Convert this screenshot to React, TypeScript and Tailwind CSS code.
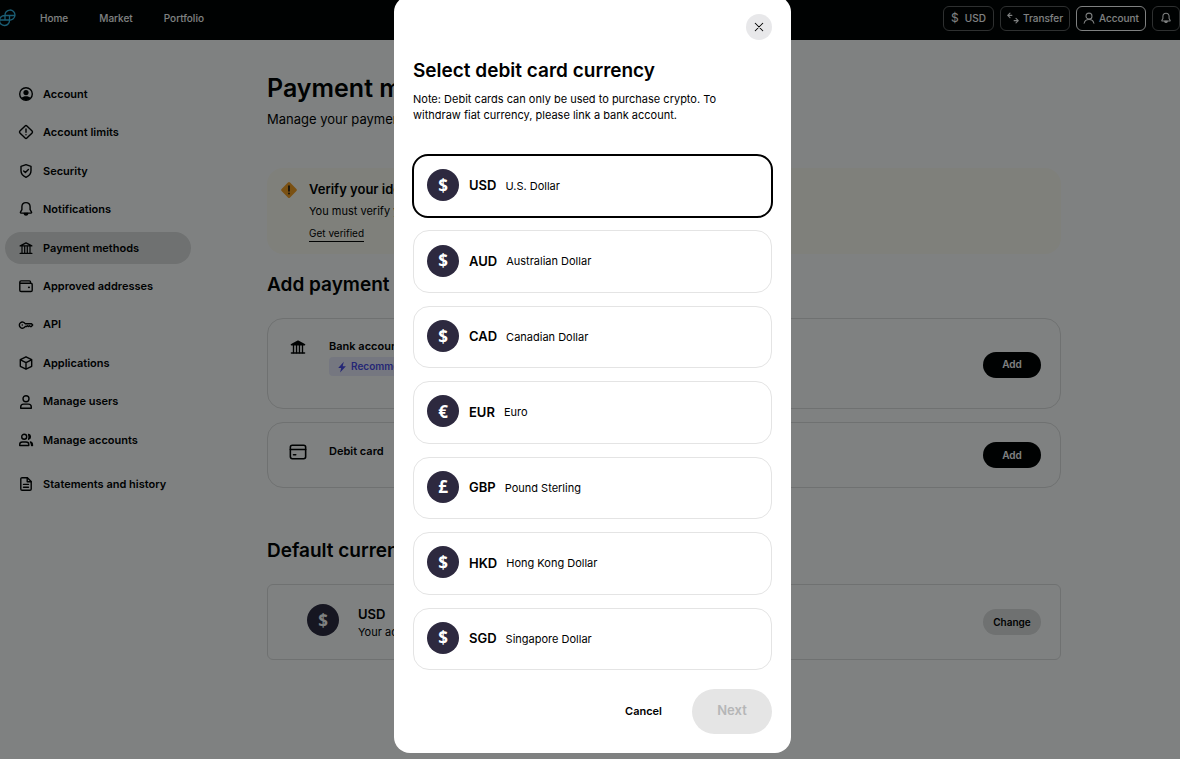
import { type ReactNode, useState } from "react";

/* ── Icons ───────────────────────────────────────────────── */

type IconProps = { className?: string; children?: ReactNode };

const Icon = ({ className = "size-4", children }: IconProps) => (
  <svg
    aria-hidden="true"
    viewBox="0 0 16 16"
    fill="none"
    stroke="currentColor"
    strokeWidth="1.4"
    strokeLinecap="round"
    strokeLinejoin="round"
    className={`shrink-0 ${className}`}
  >
    {children}
  </svg>
);

const AccountCircleIcon = () => (
  <Icon>
    <circle cx="8" cy="8" r="6.3" />
    <circle cx="8" cy="6.6" r="2.6" fill="currentColor" stroke="none" />
    <path d="M3.4 12.1c1-1.4 2.7-1.8 4.6-1.8s3.6.4 4.6 1.8A6.2 6.2 0 0 1 8 14.3a6.2 6.2 0 0 1-4.6-2.2z" fill="currentColor" stroke="none" />
  </Icon>
);

const LimitsIcon = () => (
  <Icon>
    <path d="M7.1 1.9a1.3 1.3 0 0 1 1.8 0l5.2 5.2a1.3 1.3 0 0 1 0 1.8l-5.2 5.2a1.3 1.3 0 0 1-1.8 0L1.9 8.9a1.3 1.3 0 0 1 0-1.8z" />
    <path d="M8 5v3.2M8 10.6v.2" />
  </Icon>
);

const ShieldIcon = () => (
  <Icon>
    <path d="M8 1.7l5 1.6v4.5c0 3.3-2.2 5.3-5 6.5-2.8-1.2-5-3.2-5-6.500V3.3z" />
    <path d="M5.7 7.900l1.7 1.7 3-3.1" />
  </Icon>
);

const BellIcon = ({ className }: IconProps) => (
  <Icon className={className}>
    <path d="M8 1.6c-2.6 0-4.1 1.9-4.1 4.2v2.9L2.5 11.1c-.3.5 0 1 .5 1h10c.5 0 .8-.5.5-1l-1.4-2.4V5.8c0-2.3-1.5-4.2-4.1-4.2z" />
    <path d="M6.2 12.5c.2 1 .9 1.6 1.8 1.6s1.6-.6 1.8-1.6z" fill="currentColor" />
  </Icon>
);

const BankIcon = ({ className, filled = false }: IconProps & { filled?: boolean }) => (
  <Icon className={className}>
    <path d="M2.2 5.9L8 2.9l5.8 3z" fill={filled ? "currentColor" : "none"} />
    <path d="M4 6.4v6.8M6.7 6.4v6.8M9.300 6.400v6.800M12 6.400v6.800" strokeWidth="1.2" />
    <path d="M2.200 13.400h11.600" />
  </Icon>
);

const WalletIcon = () => (
  <Icon>
    <path d="M1.8 4.3v7.9c0 .8.5 1.3 1.3 1.3h9.8c.8 0 1.3-.5 1.3-1.3V6.5c0-.8-.5-1.3-1.3-1.3H2.7c-.6 0-.9-.4-.9-.9 0-.8.5-1.4 1.3-1.4h8.4c.6 0 1 .4 1 1v1.2" />
    <path d="M10.8 9.3h.3" strokeWidth="1.8" />
  </Icon>
);

const KeyIcon = () => (
  <Icon>
    <path d="M7.2 6.7h6.3L14.7 8l-1.4 1.5h-1l-.9-.8-1 .9-1-.9-.9.8H7.200A3.100 3.100 0 1 1 7.200 6.700z" />
    <path d="M4.2 8h.1" />
  </Icon>
);

const CubeIcon = () => (
  <Icon>
    <path d="M8 1.8l5.7 2.9v6.6L8 14.2l-5.7-2.900V4.7zM2.5 4.8L8 7.7l5.5-2.900M8 7.7v6.300" />
  </Icon>
);

const UserIcon = () => (
  <Icon>
    <circle cx="8" cy="4.7" r="3" />
    <path d="M2.7 14.2v-1.3c0-1.7 1.2-2.8 2.9-2.8h4.8c1.7 0 2.9 1.1 2.9 2.8v1.3z" />
  </Icon>
);

const UsersIcon = () => (
  <Icon>
    <circle cx="6.2" cy="4.8" r="2.5" />
    <path d="M1.7 13.5v-.9c0-1.6 1.1-2.6 2.7-2.6h3.7c1.6 0 2.7 1 2.7 2.6v.9z" />
    <path d="M10.6 2.4a2.500 2.500 0 0 1 0 4.8c.7-1.500.7-3.300 0-4.800zM12.400 10c1.500.3 2.100 1.500 2.100 3.500h-.9c0-1.500-.3-2.500-1.200-3.500z" fill="currentColor" />
  </Icon>
);

const DocumentIcon = () => (
  <Icon>
    <path d="M9.4 1.7H4.1c-.8 0-1.3.5-1.3 1.3v10c0 .8.5 1.3 1.3 1.3h7.8c.8 0 1.3-.5 1.3-1.3V5.5z" />
    <path d="M9.2 1.9v3.8h3.8M5.5 8.4h5M5.5 11.2h5" />
  </Icon>
);

const CardIcon = () => (
  <Icon className="size-[18px]">
    <rect x="1.2" y="2" width="13.6" height="12" rx="1.7" />
    <path d="M1.2 5.7h13.6M4 10.5h2" />
  </Icon>
);

const PersonIcon = () => (
  <Icon className="size-3">
    <circle cx="8" cy="5.5" r="4" />
    <path d="M1.5 15c.7-3.2 3.2-5 6.5-5s5.8 1.8 6.5 5" />
  </Icon>
);

const TransferIcon = () => (
  <Icon className="size-3">
    <path d="M4 1.5L1 4.5l3 3M1 4.5h5.5M12 8.5l3 3-3 3M15 11.5H9.5" />
  </Icon>
);

const WarningIcon = () => (
  <svg aria-hidden="true" viewBox="0 0 18 18" className="size-[18px] shrink-0">
    <rect x="3" y="3" width="12" height="12" rx="1.5" transform="rotate(45 9 9)" fill="#f59e23" />
    <path d="M9 5v5M9 12.2v.6" stroke="#111" strokeWidth="1.6" strokeLinecap="round" />
  </svg>
);

const BoltIcon = () => (
  <svg aria-hidden="true" viewBox="0 0 10 12" className="h-3 w-2.5 shrink-0" fill="currentColor">
    <path d="M6.8.8L1.2 6.9h3L3.1 11.4 8.9 5.2H5.7z" />
  </svg>
);

const LogoIcon = () => (
  <svg aria-hidden="true" viewBox="0 0 18 18" className="-ml-0.5 size-[18px]" fill="none" stroke="#35b8e6" strokeWidth="1.3">
    <path d="M7 6.5A5 5 0 1 1 11.5 11H2M16.4 6.5H6.5A5 5 0 1 0 11.5 11M7 6v5M11.5 6.5V11" />
  </svg>
);

/* ── Data ────────────────────────────────────────────────── */

const NAV_LINKS = ["Home", "Market", "Portfolio"];

const SIDEBAR_ITEMS = [
  { label: "Account", icon: <AccountCircleIcon /> },
  { label: "Account limits", icon: <LimitsIcon /> },
  { label: "Security", icon: <ShieldIcon /> },
  { label: "Notifications", icon: <BellIcon /> },
  { label: "Payment methods", icon: <BankIcon />, active: true },
  { label: "Approved addresses", icon: <WalletIcon /> },
  { label: "API", icon: <KeyIcon /> },
  { label: "Applications", icon: <CubeIcon /> },
  { label: "Manage users", icon: <UserIcon /> },
  { label: "Manage accounts", icon: <UsersIcon /> },
];

const CURRENCIES = [
  { code: "USD", name: "U.S. Dollar", symbol: "$" },
  { code: "AUD", name: "Australian Dollar", symbol: "$" },
  { code: "CAD", name: "Canadian Dollar", symbol: "$" },
  { code: "EUR", name: "Euro", symbol: "€" },
  { code: "GBP", name: "Pound Sterling", symbol: "£" },
  { code: "HKD", name: "Hong Kong Dollar", symbol: "$" },
  { code: "SGD", name: "Singapore Dollar", symbol: "$" },
];

/* ── Shared pieces ───────────────────────────────────────── */

const CurrencyBadge = ({ symbol }: { symbol: string }) => (
  <span
    aria-hidden="true"
    className="flex size-8 shrink-0 items-center justify-center rounded-full bg-[#2d293f] font-['Open_Sans',sans-serif] text-[17px] leading-none font-bold text-white"
  >
    {symbol}
  </span>
);

const AddButton = () => (
  <button type="button" className="h-[26px] w-[58px] rounded-full bg-black text-[10px] font-semibold text-white">
    Add
  </button>
);

type SidebarLinkProps = { label: string; icon: ReactNode; active?: boolean };

const SidebarLink = ({ label, icon, active }: SidebarLinkProps) => (
  <a
    href="#"
    className={`flex h-8 items-center gap-[9px] rounded-full pl-[13px] text-[11px] font-semibold ${active ? "bg-[#dedede]" : ""}`}
  >
    {icon}
    {label}
  </a>
);

/* ── Page sections ───────────────────────────────────────── */

const Header = () => (
  <header className="flex h-10 items-center justify-between bg-black pb-1 text-[10px] font-medium text-white">
    <nav className="flex items-center">
      <a href="#" aria-label="Gemini" className="mr-6">
        <LogoIcon />
      </a>
      <div className="flex gap-[31px]">
        {NAV_LINKS.map((link) => (
          <a key={link} href="#">
            {link}
          </a>
        ))}
      </div>
    </nav>
    <div className="flex items-center gap-1.5">
      <button type="button" className="flex h-[25px] w-[51px] items-center justify-center gap-1.5 rounded-md border border-[#5c5c5c]">
        <span className="text-xs font-normal">$</span>
        <span>USD</span>
      </button>
      <button type="button" className="flex h-[25px] w-[70px] items-center justify-center gap-1 rounded-md border border-[#5c5c5c]">
        <TransferIcon />
        Transfer
      </button>
      <button type="button" className="flex h-[25px] w-[70px] items-center justify-center gap-1 rounded-md border border-white">
        <PersonIcon />
        Account
      </button>
      <button type="button" aria-label="Notifications" className="flex h-[25px] w-7 items-center justify-center rounded-md border border-[#5c5c5c]">
        <BellIcon className="size-3" />
      </button>
    </div>
  </header>
);

const Sidebar = () => (
  <aside className="w-[186px] shrink-0 pt-[38px]">
    <nav className="flex h-[378px] flex-col justify-between">
      {SIDEBAR_ITEMS.map((item) => (
        <SidebarLink key={item.label} {...item} />
      ))}
    </nav>
    <div className="mt-3">
      <SidebarLink label="Statements and history" icon={<DocumentIcon />} />
    </div>
  </aside>
);

const PaymentMethods = () => (
  <main className="min-w-0 flex-1 pt-8">
    <h1 className="text-[25px] leading-8 font-semibold">Payment methods</h1>
    <p className="mt-[7px] text-[13px] leading-4">Manage your payment methods</p>

    <section className="mt-[41px] flex h-[86px] gap-[11px] rounded-2xl bg-[#fffcf3] pt-3 pl-[13px]">
      <div className="pt-px">
        <WarningIcon />
      </div>
      <div>
        <h2 className="text-[13px] leading-[18px] font-semibold">Verify your identity</h2>
        <p className="mt-[5px] text-[11px] leading-4">You must verify your identity</p>
        <a href="#" className="mt-[7px] inline-block border-b border-black text-[10px] leading-[15px]">
          Get verified
        </a>
      </div>
    </section>

    <h2 className="mt-[17px] text-[19px] leading-7 font-semibold">Add payment method</h2>
    <section className="mt-[19px] flex h-[91px] rounded-2xl border border-[#dedede] pt-[19px] pr-[19px] pl-[21px]">
      <BankIcon filled className="size-[18px]" />
      <div className="ml-[22px] flex-1">
        <h3 className="text-[11px] leading-4 font-semibold">Bank account</h3>
        <span className="mt-[3px] inline-flex h-[19px] items-center gap-1 rounded-sm bg-[#ebebfc] px-2 text-[10px] font-semibold text-[#4a4ae8]">
          <BoltIcon />
          Recommended
        </span>
      </div>
      <div className="pt-3">
        <AddButton />
      </div>
    </section>
    <section className="mt-[13px] flex h-[66px] items-center rounded-2xl border border-[#dedede] pr-[19px] pl-[21px]">
      <div className="flex flex-1 gap-[22px] pb-1.5">
        <CardIcon />
        <h3 className="text-[11px] leading-4 font-semibold">Debit card</h3>
      </div>
      <AddButton />
    </section>

    <h2 className="mt-[49px] text-[19px] leading-7 font-semibold">Default currency</h2>
    <section className="mt-[19px] flex h-[76px] items-center rounded-md border border-[#dedede] pr-[19px] pl-[39px]">
      <div className="pb-1">
        <CurrencyBadge symbol="$" />
      </div>
      <div className="ml-[19px] flex-1 pt-0.5">
        <h3 className="text-[13px] leading-4 font-semibold">USD</h3>
        <p className="mt-0.5 text-[11px] leading-4">Your account</p>
      </div>
      <button type="button" className="h-[26px] w-[58px] rounded-full bg-[#dedede] text-[10px] font-semibold">
        Change
      </button>
    </section>
  </main>
);

/* ── Currency dialog ─────────────────────────────────────── */

const CurrencyDialog = () => {
  const [selected, setSelected] = useState("USD");

  return (
    <div className="fixed inset-0 flex items-start justify-center overflow-hidden bg-[#000404]/50 pl-[5px]">
      <form
        role="dialog"
        aria-modal="true"
        aria-labelledby="dialog-title"
        className="-mt-1 flex w-[397px] flex-col rounded-2xl bg-white px-[19px] pt-[18px] pb-[19px]"
      >
        <button
          type="button"
          aria-label="Close"
          className="flex size-[26px] items-center justify-center self-end rounded-full bg-[#e8e8ea]"
        >
          <Icon className="size-3">
            <path d="M3 3l10 10M13 3L3 13" />
          </Icon>
        </button>
        <h2 id="dialog-title" className="mt-[17px] text-[19px] leading-7 font-semibold">
          Select debit card currency
        </h2>
        <p className="mt-1.5 pr-10 text-[11px] leading-4">
          Note: Debit cards can only be used to purchase crypto. To withdraw fiat currency, please link a bank account.
        </p>

        <div className="mt-8 grid h-[515px] auto-rows-fr gap-[13px]">
          {CURRENCIES.map(({ code, name, symbol }) => (
            <label
              key={code}
              className="relative flex items-center gap-[9px] rounded-2xl border border-[#e4e4e4] px-[13px] has-checked:-m-px has-checked:border-2 has-checked:border-black"
            >
              <input
                type="radio"
                name="currency"
                value={code}
                checked={selected === code}
                onChange={() => setSelected(code)}
                className="sr-only"
              />
              <span className="pr-px pb-0.5">
                <CurrencyBadge symbol={symbol} />
              </span>
              <span className="text-[13px] font-semibold">{code}</span>
              <span className="text-[11px]">{name}</span>
            </label>
          ))}
        </div>

        <div className="mt-[19px] flex items-center justify-end gap-[30px]">
          <button type="button" className="text-[11px] font-semibold">
            Cancel
          </button>
          <button
            type="submit"
            disabled
            className="h-[45px] w-20 rounded-full bg-[#e5e5e5] pb-0.5 text-[13px] font-semibold text-[#b5b6b7]"
          >
            Next
          </button>
        </div>
      </form>
    </div>
  );
};

export default function App() {
  return (
    <div className="min-h-screen bg-white font-[Inter,'Liberation_Sans',sans-serif] text-black">
      <Header />
      <div className="flex gap-[76px] pr-[119px] pl-[5px]">
        <Sidebar />
        <PaymentMethods />
      </div>
      <CurrencyDialog />
    </div>
  );
}
